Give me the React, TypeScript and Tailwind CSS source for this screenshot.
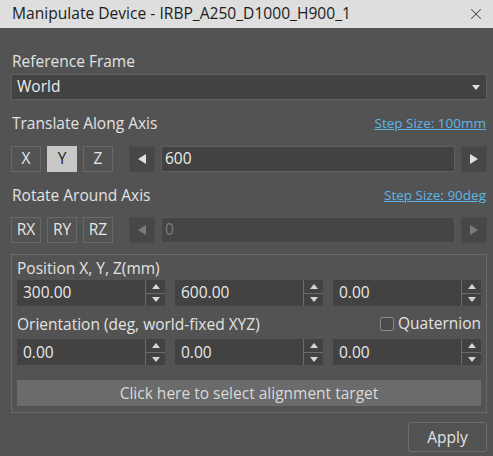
import { X } from "lucide-react";

function AxisButton({ label, active }: { label: string; active?: boolean }) {
  return (
    <button
      className={
        active
          ? "h-[26px] w-[30px] border border-[#c8c8c8] bg-[#c8c8c8] text-[15.5px] text-[#1e1e1e]"
          : "h-[26px] w-[30px] border border-[#686868] bg-[#535353] text-[15.5px] text-[#e6e6e6]"
      }>
      {label}
    </button>
  );
}

function StepButton({ dir, disabled }: { dir: "left" | "right"; disabled?: boolean }) {
  const fill = disabled ? "#7a7a7a" : "#e0e0e0";
  return (
    <button className="flex h-[26px] w-[26px] items-center justify-center border border-[#4a4a4a] bg-[#474747]">
      <svg width="10" height="12" viewBox="0 0 10 12">
        {dir === "left" ? (
          <polygon points="9,1 9,11 1,6" fill={fill} />
        ) : (
          <polygon points="1,1 1,11 9,6" fill={fill} />
        )}
      </svg>
    </button>
  );
}

function SpinBox({ value }: { value: string }) {
  return (
    <div className="flex h-[26px] flex-1 bg-[#424242]">
      <div className="flex flex-1 items-center pl-[6px] text-[15.5px] text-[#e8e8e8]">
        {value}
      </div>
      <div className="flex w-[20px] flex-col border-l border-[#6b6b6b]">
        <div className="flex flex-1 items-center justify-center border-b border-[#6b6b6b]">
          <svg width="8" height="5" viewBox="0 0 8 5">
            <polygon points="0,5 8,5 4,0" fill="#d6d6d6" />
          </svg>
        </div>
        <div className="flex flex-1 items-center justify-center">
          <svg width="8" height="5" viewBox="0 0 8 5">
            <polygon points="0,0 8,0 4,5" fill="#d6d6d6" />
          </svg>
        </div>
      </div>
    </div>
  );
}

export default function App() {
  return (
    <div className="flex h-[456px] w-[493px] flex-col bg-[#535353] font-['Open_Sans','Noto_Sans',sans-serif] text-[#e2e2e2]">
      <div className="flex h-[28px] shrink-0 items-center justify-between bg-[#dedede] pl-[12px] pr-[8px] text-[#1c1c1c]">
        <span className="text-[15.6px]">Manipulate Device - IRBP_A250_D1000_H900_1</span>
        <X size={18} strokeWidth={1.4} className="text-[#4a4a4a]" />
      </div>

      <div className="flex flex-1 flex-col pl-[11px] pr-[6px] pt-[21px]">
        <div className="pl-[1px] text-[15.5px] leading-[24px]">Reference Frame</div>
        <div className="mt-[1px] flex h-[26px] items-center justify-between border border-[#5f5f5f] bg-[#424242] pl-[5px] pr-[6px]">
          <span className="text-[15.5px] text-[#ececec]">World</span>
          <svg width="8" height="5" viewBox="0 0 8 5">
            <polygon points="0,0 8,0 4,5" fill="#e0e0e0" />
          </svg>
        </div>

        <div className="mt-[11px] flex items-center justify-between">
          <span className="pl-[1px] text-[15.5px] leading-[24px]">Translate Along Axis</span>
          <a className="pr-[1px] text-[13.5px] text-[#5cb6ea] underline">Step Size: 100mm</a>
        </div>
        <div className="mt-[11px] flex items-center">
          <div className="flex gap-[6px]">
            <AxisButton label="X" />
            <AxisButton label="Y" active />
            <AxisButton label="Z" />
          </div>
          <div className="ml-[16px] flex flex-1 gap-[6px]">
            <StepButton dir="left" />
            <div className="flex h-[26px] flex-1 items-center border border-[#5f5f5f] bg-[#424242] pl-[3px] text-[15.5px] text-[#ececec]">
              600
            </div>
            <StepButton dir="right" />
          </div>
        </div>

        <div className="mt-[11px] flex items-center justify-between">
          <span className="pl-[1px] text-[15.5px] leading-[24px]">Rotate Around Axis</span>
          <a className="pr-[1px] text-[13.5px] text-[#5cb6ea] underline">Step Size: 90deg</a>
        </div>
        <div className="mt-[10px] flex items-center">
          <div className="flex gap-[6px]">
            <AxisButton label="RX" />
            <AxisButton label="RY" />
            <AxisButton label="RZ" />
          </div>
          <div className="ml-[16px] flex flex-1 gap-[6px]">
            <StepButton dir="left" disabled />
            <div className="flex h-[26px] flex-1 items-center border border-[#585858] bg-[#454545] pl-[3px] text-[15.5px] text-[#7c7c7c]">
              0
            </div>
            <StepButton dir="right" disabled />
          </div>
        </div>

        <div className="mt-[11px] flex flex-col border border-[#6a6a6a] px-[5px] pb-[6px]">
          <div className="pt-[2px] text-[15.5px] leading-[22px]">Position X, Y, Z(mm)</div>
          <div className="mt-[1px] flex gap-[10px]">
            <SpinBox value="300.00" />
            <SpinBox value="600.00" />
            <SpinBox value="0.00" />
          </div>
          <div className="mt-[6px] flex items-center justify-between">
            <span className="text-[15.5px] leading-[22px]">Orientation (deg, world-fixed XYZ)</span>
            <label className="flex items-center gap-[4px] text-[15.5px]">
              <span className="h-[14px] w-[14px] rounded-[2px] border border-[#8a8a8a] bg-[#4a4a4a]" />
              Quaternion
            </label>
          </div>
          <div className="mt-[4px] flex gap-[10px]">
            <SpinBox value="0.00" />
            <SpinBox value="0.00" />
            <SpinBox value="0.00" />
          </div>
          <button className="mt-[15px] h-[26px] bg-[#6b6b6b] text-[15.5px] text-[#dadada]">
            Click here to select alignment target
          </button>
        </div>

        <div className="mt-[9px] flex justify-end">
          <button className="h-[30px] w-[79px] rounded-[3px] border border-[#6e6e6e] text-[15.5px] text-[#e2e2e2]">
            Apply
          </button>
        </div>
      </div>
    </div>
  );
}
